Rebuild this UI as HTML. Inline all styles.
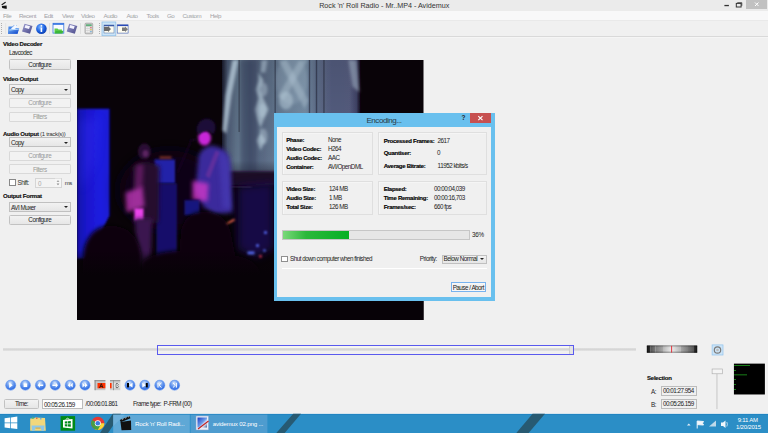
<!DOCTYPE html>
<html><head><meta charset="utf-8">
<style>
*{box-sizing:border-box;margin:0;padding:0}
html,body{width:768px;height:433px;overflow:hidden;background:#f0f0f0;font-family:"Liberation Sans",sans-serif;position:relative}
.a{position:absolute}
.t{position:absolute;white-space:nowrap;line-height:1;margin-top:.8px}
#title{margin-top:0}
.b{margin-top:0!important;font-weight:bold;letter-spacing:-.22px!important;-webkit-text-stroke:.15px #000}
.btn{position:absolute;border:1px solid #c2c2c2;background:linear-gradient(#f2f2f2,#e6e6e6);border-radius:1.5px}
.btnd{position:absolute;border:1px solid #d9d9d9;background:#f2f2f2;border-radius:1px}
.combo{position:absolute;border:1px solid #c0c0c0;background:linear-gradient(#f2f2f2,#e6e6e6)}
.arr{position:absolute;width:0;height:0;border-left:2.2px solid transparent;border-right:2.2px solid transparent;border-top:2.6px solid #222}
.lb{position:absolute;white-space:nowrap;line-height:1;font-size:6px;font-weight:bold;letter-spacing:-.27px;color:#000;-webkit-text-stroke:.15px #000}
.vl{position:absolute;white-space:nowrap;line-height:1;font-size:6.3px;letter-spacing:-.5px;color:#222}
.gb{position:absolute;border:1px solid #dfdfdf;box-shadow:inset .6px .6px 0 #fafafa}
</style></head><body>

<!-- title bar -->
<div class="a" style="left:0;top:0;width:768px;height:10.7px;background:#ebebeb"></div>
<div class="t" id="title" style="left:319.2px;top:1.9px;font-size:7.2px;letter-spacing:-.02px;color:#333">Rock 'n' Roll Radio - Mr..MP4 - Avidemux</div>
<div class="a" style="left:746px;top:0;width:21px;height:9px;background:#c1c1c1"></div>
<svg class="a" style="left:0;top:0" width="768" height="12" viewBox="0 0 768 12">
 <path d="M1.5 4.2 L5.2 1.8 Q6 1.8 5.8 2.8 L2.2 5.2 Q1.2 5.2 1.5 4.2 Z" fill="#1a1a1a"/>
 <path d="M1.8 6 L6.6 5.4 L6.8 8.8 L5.5 8.8 L2.2 8 Z" fill="#111"/>
 <rect x="724.4" y="4.9" width="4.5" height="1.3" fill="#333"/>
 <rect x="736.3" y="3.4" width="4.8" height="3.6" fill="none" stroke="#333" stroke-width="1"/>
 <path d="M737.3 2.7 L741.8 2.7 L741.8 5.8" fill="none" stroke="#333" stroke-width=".8"/>
 <path d="M755 2.5 L758.5 6 M758.5 2.5 L755 6" stroke="#fff" stroke-width="1"/>
</svg>
<svg class="a" style="left:278px;top:115px" width="8" height="10" viewBox="278 115 8 10">
 <path d="M279.6 118.6 L283.4 116.2 Q284.4 116.2 284.2 117.2 L280.4 119.6 Q279.4 119.6 279.6 118.6 Z" fill="#222"/>
 <path d="M279.8 120.2 L285 119.6 L285.2 123.6 L284 123.8 L280.2 123 Z" fill="#1a1a1a"/>
 <path d="M281 120.8 L283.5 120.6" stroke="#ccc" stroke-width=".6"/>
</svg>

<!-- menu bar -->
<div class="a" style="left:0;top:10.7px;width:768px;height:9.6px;background:#f8f8f9"></div>
<div class="a" style="left:0;top:36px;width:768px;height:1px;background:#d9d9d9"></div>
<div class="a" style="left:0;top:20.3px;width:768px;height:0.8px;background:#e9e9e9"></div>


<!-- toolbar -->
<svg class="a" style="left:0;top:20px" width="140" height="17" viewBox="0 20 140 17">
 <defs>
  <linearGradient id="gblue" x1="0" y1="0" x2="1" y2="1"><stop offset="0" stop-color="#7ab8f5"/><stop offset="1" stop-color="#0a3ec8"/></linearGradient>
  <radialGradient id="ginfo" cx=".4" cy=".35" r=".7"><stop offset="0" stop-color="#7fb8ff"/><stop offset=".6" stop-color="#1a5fe0"/><stop offset="1" stop-color="#0c3aa8"/></radialGradient>
  <linearGradient id="gdisk" x1="0" y1="0" x2="1" y2="1"><stop offset="0" stop-color="#9a9ad0"/><stop offset="1" stop-color="#4a4a88"/></linearGradient>
 </defs>
 <g fill="#b0b0b0"><rect x="1" y="23" width="1" height="1"/><rect x="1" y="25" width="1" height="1"/><rect x="1" y="27" width="1" height="1"/><rect x="1" y="29" width="1" height="1"/><rect x="1" y="31" width="1" height="1"/><rect x="1" y="33" width="1" height="1"/>
 <rect x="99" y="23" width="1" height="1"/><rect x="99" y="25" width="1" height="1"/><rect x="99" y="27" width="1" height="1"/><rect x="99" y="29" width="1" height="1"/><rect x="99" y="31" width="1" height="1"/><rect x="99" y="33" width="1" height="1"/></g>
 <rect x="5.5" y="23" width="0.6" height="11" fill="#dcdcdc"/>
 <rect x="49" y="23" width="0.7" height="11" fill="#d8d8d8"/>
 <rect x="80.3" y="23" width="0.7" height="11" fill="#d8d8d8"/>
 <!-- open -->
 <path d="M8.5 26.5 L12.5 26.5 L13.5 25.5 L17 25.5 L17 28 L19 28 L17.5 33.7 L8 33.7 Z" fill="#4a8ae8"/>
 <path d="M11 28.5 L15.5 24.5 L17.8 27.2 L13 30 Z" fill="#f4f8ff"/>
 <path d="M9.5 29.5 L19.2 28.5 L17.5 33.7 L8 33.7 Z" fill="url(#gblue)"/>
 <path d="M9.5 29.5 L19.2 28.5 L18.9 29.5 L9.3 30.4 Z" fill="#bfe0ff"/>
 <!-- save -->
 <path d="M24.5 23.7 L32.5 26 L30 33.8 L22 31.5 Z" fill="url(#gdisk)"/>
 <path d="M25.5 25 L30 26.3 L29 29 L24.6 27.8 Z" fill="#f4f4ff"/>
 <!-- info -->
 <circle cx="41.4" cy="28.7" r="5.3" fill="url(#ginfo)"/>
 <rect x="40.6" y="27.5" width="1.6" height="4.5" fill="#fff"/><circle cx="41.4" cy="25.8" r=".9" fill="#fff"/>
 <!-- folder window -->
 <rect x="53" y="23.3" width="10.8" height="9.8" fill="#f8fbff" stroke="#3a78e0" stroke-width=".8"/>
 <rect x="53" y="23.3" width="10.8" height="1.5" fill="#2f6fe0"/>
 <path d="M54.5 28.5 L57.5 28.5 L58.5 29.5 L62 29.5 L61.5 33.2 L54.5 33.2 Z" fill="#5ccc4a"/><path d="M55.5 31 L63.5 30.8 L62.5 33.4 L54.8 33.4 Z" fill="#3cb83a"/>
 <!-- save2 -->
 <path d="M69.2 23.7 L77.3 26 L74.8 33.8 L66.7 31.5 Z" fill="url(#gdisk)"/>
 <path d="M70.2 25 L74.7 26.3 L73.7 29 L69.3 27.8 Z" fill="#f4f4ff"/>
 <!-- calc -->
 <rect x="85" y="23.2" width="7.7" height="10.6" rx="1" fill="#d4d4d4" stroke="#8a8a8a" stroke-width=".6"/>
 <rect x="86" y="24.3" width="5.7" height="1.8" fill="#5fae7a"/>
 <g fill="#f4f4f4"><rect x="86.2" y="27" width="1.4" height="1.2"/><rect x="88.2" y="27" width="1.4" height="1.2"/><rect x="86.2" y="29" width="1.4" height="1.2"/><rect x="88.2" y="29" width="1.4" height="1.2"/><rect x="86.2" y="31" width="1.4" height="1.2"/><rect x="88.2" y="31" width="1.4" height="1.2"/></g><rect x="90.2" y="27" width="1.4" height="1.2" fill="#e07070"/><rect x="90.2" y="29" width="1.4" height="1.2" fill="#e0c050"/><rect x="90.2" y="31" width="1.4" height="1.2" fill="#70b0e0"/>
 <!-- pressed -->
 <rect x="102" y="22" width="13.8" height="13.7" fill="#cce4f7" stroke="#92c0e8" stroke-width=".8"/>
 <rect x="104" y="25" width="10" height="8" fill="#fffdf0" stroke="#4a6aa0" stroke-width=".5"/>
 <rect x="104" y="25" width="10" height="1.3" fill="#3a5aa8"/>
 <path d="M104 27 L108 27 L108 26 L111 29 L108 32 L108 31 L104 31 Z" fill="#6a6a6a"/>
 <!-- next -->
 <rect x="117.2" y="24.8" width="10.9" height="8.3" fill="#fffdf0" stroke="#3a5ab0" stroke-width=".6"/>
 <rect x="117.2" y="24.8" width="10.9" height="1.3" fill="#2a4ab8"/>
 <path d="M122 27.5 L125 27.5 L125 26.5 L128 29.2 L125 32 L125 31 L122 31 Z" fill="#7a7a7a"/>
</svg>
<div class="a" style="left:0;top:37px;width:768px;height:1px;background:#f5f5f5"></div>

<!-- menu text -->
<div class="t" style="left:3px;top:11.9px;font-size:6.2px;letter-spacing:-.45px;color:#a2a2a6">File</div>
<div class="t" style="left:19px;top:11.9px;font-size:6.2px;letter-spacing:-.45px;color:#a2a2a6">Recent</div>
<div class="t" style="left:44px;top:11.9px;font-size:6.2px;letter-spacing:-.45px;color:#a2a2a6">Edit</div>
<div class="t" style="left:62px;top:11.9px;font-size:6.2px;letter-spacing:-.45px;color:#a2a2a6">View</div>
<div class="t" style="left:81px;top:11.9px;font-size:6.2px;letter-spacing:-.45px;color:#a2a2a6">Video</div>
<div class="t" style="left:103.5px;top:11.9px;font-size:6.2px;letter-spacing:-.45px;color:#a2a2a6">Audio</div>
<div class="t" style="left:126.5px;top:11.9px;font-size:6.2px;letter-spacing:-.45px;color:#a2a2a6">Auto</div>
<div class="t" style="left:146.5px;top:11.9px;font-size:6.2px;letter-spacing:-.45px;color:#a2a2a6">Tools</div>
<div class="t" style="left:167px;top:11.9px;font-size:6.2px;letter-spacing:-.45px;color:#a2a2a6">Go</div>
<div class="t" style="left:182.5px;top:11.9px;font-size:6.2px;letter-spacing:-.45px;color:#a2a2a6">Custom</div>
<div class="t" style="left:210px;top:11.9px;font-size:6.2px;letter-spacing:-.45px;color:#a2a2a6">Help</div>

<!-- left panel -->
<div class="t b" style="left:3px;top:41px;font-size:6px;letter-spacing:-.4px;color:#111">Video Decoder</div>
<div class="t" style="left:9px;top:49.6px;font-size:6.3px;letter-spacing:-.5px;color:#222">Lavcodec</div>
<div class="btn" style="left:9px;top:59px;width:61.5px;height:10.5px"></div>
<div class="t" style="left:9px;top:60.8px;width:61.5px;text-align:center;font-size:6.3px;letter-spacing:-.5px;color:#222">Configure</div>

<div class="t b" style="left:3px;top:76px;font-size:6px;letter-spacing:-.4px;color:#111">Video Output</div>
<div class="combo" style="left:9px;top:84px;width:61.5px;height:10.5px"></div>
<div class="t" style="left:11px;top:86.4px;font-size:6.3px;letter-spacing:-.5px;color:#222">Copy</div>
<div class="arr" style="left:64px;top:88.5px"></div>
<div class="btnd" style="left:9px;top:97.5px;width:61.5px;height:10.5px"></div>
<div class="t" style="left:9px;top:99.3px;width:61.5px;text-align:center;font-size:6.3px;letter-spacing:-.5px;color:#9a9a9a">Configure</div>
<div class="btnd" style="left:9px;top:111.5px;width:61.5px;height:10.5px"></div>
<div class="t" style="left:9px;top:113.3px;width:61.5px;text-align:center;font-size:6.3px;letter-spacing:-.5px;color:#9a9a9a">Filters</div>

<div class="t" style="left:3px;top:130.6px;margin-top:0;font-size:6px;color:#111"><b style="letter-spacing:-.22px;-webkit-text-stroke:.15px #000">Audio Output</b><span style="letter-spacing:-.3px;color:#333"> (1 track(s))</span></div>
<div class="combo" style="left:9px;top:137px;width:61.5px;height:10px"></div>
<div class="t" style="left:11px;top:139.4px;font-size:6.3px;letter-spacing:-.5px;color:#222">Copy</div>
<div class="arr" style="left:64px;top:141.5px"></div>
<div class="btnd" style="left:9px;top:150.5px;width:61.5px;height:10px"></div>
<div class="t" style="left:9px;top:152.4px;width:61.5px;text-align:center;font-size:6.3px;letter-spacing:-.5px;color:#9a9a9a">Configure</div>
<div class="btnd" style="left:9px;top:164px;width:61.5px;height:10px"></div>
<div class="t" style="left:9px;top:165.9px;width:61.5px;text-align:center;font-size:6.3px;letter-spacing:-.5px;color:#9a9a9a">Filters</div>
<div class="a" style="left:9px;top:179px;width:6.5px;height:6.5px;border:1px solid #888;background:#fff"></div>
<div class="t" style="left:17.5px;top:179.5px;font-size:6.3px;letter-spacing:-.5px;color:#333">Shift:</div>
<div class="a" style="left:35px;top:178px;width:27px;height:9.5px;border:1px solid #d5d5d5;background:#f3f3f3"></div>
<div class="t" style="left:38px;top:180.5px;font-size:6.3px;letter-spacing:-.5px;color:#aaa">0</div>
<div class="t" style="left:64.7px;top:178.8px;font-size:6px;letter-spacing:-.5px;color:#333">ms</div>
<svg class="a" style="left:54px;top:178px" width="8" height="10" viewBox="54 178 8 10"><rect x="55" y="178.6" width="6" height="8.2" fill="#f6f6f6"/><path d="M56.6 181.8 L58 180.2 L59.4 181.8 Z M56.6 183.6 L58 185.2 L59.4 183.6 Z" fill="#8a8a8a"/></svg>

<div class="t b" style="left:3px;top:193px;font-size:6px;letter-spacing:-.4px;color:#111">Output Format</div>
<div class="combo" style="left:9px;top:202px;width:61.5px;height:9.5px"></div>
<div class="t" style="left:11px;top:204px;font-size:6.3px;letter-spacing:-.5px;color:#222">AVI Muxer</div>
<div class="arr" style="left:64px;top:206px"></div>
<div class="btn" style="left:9px;top:215px;width:61.5px;height:10px"></div>
<div class="t" style="left:9px;top:216.6px;width:61.5px;text-align:center;font-size:6.3px;letter-spacing:-.5px;color:#222">Configure</div>

<!-- video -->
<svg class="a" id="video" style="left:77.4px;top:59.5px" width="346.5" height="260" viewBox="77.5 59.5 346.5 260">
 <defs>
  <filter id="b05" x="-50%" y="-50%" width="200%" height="200%"><feGaussianBlur stdDeviation=".6"/></filter>
  <filter id="b15" x="-50%" y="-50%" width="200%" height="200%"><feGaussianBlur stdDeviation="1.5"/></filter>
  <filter id="b1" x="-50%" y="-50%" width="200%" height="200%"><feGaussianBlur stdDeviation="1"/></filter>
  <filter id="b2" x="-50%" y="-50%" width="200%" height="200%"><feGaussianBlur stdDeviation="2"/></filter>
  <filter id="b4" x="-50%" y="-50%" width="200%" height="200%"><feGaussianBlur stdDeviation="4"/></filter>
  <filter id="b8" x="-50%" y="-50%" width="200%" height="200%"><feGaussianBlur stdDeviation="8"/></filter>
  <linearGradient id="curt" x1="222.5" x2="361" y1="0" y2="0" gradientUnits="userSpaceOnUse">
   <stop offset="0" stop-color="#181a2a"/><stop offset=".04" stop-color="#4a5872"/><stop offset=".12" stop-color="#64788e"/><stop offset=".2" stop-color="#52607a"/>
   <stop offset=".3" stop-color="#5a6a84"/><stop offset=".45" stop-color="#6c829a"/><stop offset=".6" stop-color="#7890a8"/><stop offset=".68" stop-color="#62728e"/>
   <stop offset=".8" stop-color="#565e82"/><stop offset=".92" stop-color="#585e82"/><stop offset=".97" stop-color="#42466a"/><stop offset="1" stop-color="#140c1c"/>
  </linearGradient>
  <linearGradient id="curtv" x1="0" x2="0" y1="59.5" y2="178" gradientUnits="userSpaceOnUse">
   <stop offset="0" stop-color="#000" stop-opacity=".12"/><stop offset=".85" stop-color="#000" stop-opacity="0"/><stop offset="1" stop-color="#100420" stop-opacity=".5"/>
  </linearGradient>
  <linearGradient id="bluep" x1="77.5" x2="110" y1="0" y2="0" gradientUnits="userSpaceOnUse">
   <stop offset="0" stop-color="#1410a8"/><stop offset=".3" stop-color="#1a16cc"/><stop offset=".7" stop-color="#1e1ce0"/><stop offset="1" stop-color="#1c1ad4"/>
  </linearGradient>
 </defs>
 <rect x="77.5" y="59.5" width="346.5" height="260" fill="#090308"/>
 <!-- curtain -->
 <rect x="222.5" y="59.5" width="138.5" height="116" fill="url(#curt)" filter="url(#b05)"/>
 <rect x="222.5" y="59.5" width="138.5" height="116" fill="url(#curtv)"/>
 <g filter="url(#b15)" fill="#b4c8d6">
  <path d="M233 59.5 L239 59.5 L232 95 L227 133 L223 130 L226 95 Z" opacity="0.81"/>
  <path d="M259 72 L264 80 L260 89 L264 98 L269 109 L264 120 L260 130 L266 140 L261 150 L257 140 L262 130 L258 120 L255 109 L259 98 L256 89 L259 80 Z" opacity="0.68"/>
  <path d="M262 59.5 L268 59.5 L266 72 L261 72 Z" opacity="0.54"/>
  <ellipse cx="264" cy="89" rx="4" ry="7" opacity="0.47"/>
  <ellipse cx="263" cy="110" rx="4" ry="7" opacity="0.47"/>
  <ellipse cx="264" cy="136" rx="4" ry="8" opacity="0.47"/>
  <ellipse cx="286.5" cy="100" rx="7" ry="9" opacity="0.54"/>
  <path d="M279 59.5 L287 59.5 L309 100 L305 108 Z" opacity="0.41"/>
  <path d="M300 59.5 L308 59.5 L284 100 L278 96 Z" opacity="0.38"/>
  <ellipse cx="292" cy="80" rx="16" ry="24" opacity="0.20"/>
  <path d="M349 59.5 L357 59.5 L360 92 L353 86 Z" opacity="0.47"/>
 </g>
 <rect x="241" y="59.5" width="16" height="114" fill="#283250" opacity=".35" filter="url(#b2)"/>
 <g fill="#10101e" opacity=".45" filter="url(#b05)"><rect x="239" y="59.5" width="1.2" height="72"/><rect x="275" y="59.5" width="1.3" height="54"/><rect x="309.3" y="59.5" width="1.4" height="54"/><rect x="316.3" y="59.5" width="1.4" height="54"/><rect x="323.8" y="59.5" width="1.3" height="54"/></g>
 <rect x="220" y="171" width="58" height="14" fill="#1e0828" filter="url(#b1)"/>
 <!-- blue panel -->
 <path d="M77.5 108.3 L110 108.3 L110 215 L95 245 L85 258 L77.5 258 Z" fill="url(#bluep)" filter="url(#b1)"/>
 <path d="M80 120 L100 118 L96 160 L82 190 Z" fill="#3a3aff" opacity=".25" filter="url(#b4)"/>
 <!-- background glows -->
 <ellipse cx="170" cy="190" rx="50" ry="40" fill="#0e0416" filter="url(#b8)"/>
 <path d="M238 186 L274 182 L274 248 L256 258 L238 248 Z" fill="#1c0c5e" opacity=".7" filter="url(#b4)"/>
 <!-- amp -->
 <rect x="155" y="159" width="20.5" height="24" fill="#2420a8" filter="url(#b1)"/>
 <rect x="157" y="183" width="20.4" height="75" fill="#14106a" filter="url(#b1)"/>
 <rect x="160" y="155.5" width="12" height="3" fill="#c05030" opacity=".5" filter="url(#b1)"/>
 <!-- guitarist 1 -->
 <ellipse cx="145" cy="151" rx="6.5" ry="8" fill="#2a1034" filter="url(#b1)"/>
 <path d="M133 166 Q146 157 160 166 L159 222 L134 222 Z" fill="#26102e" filter="url(#b2)"/>
 <path d="M137 164 L144 164 L143 188 L135 188 Z" fill="#a02a98" opacity=".45" filter="url(#b2)"/><ellipse cx="146" cy="153" rx="3" ry="3.5" fill="#8a3a8a" opacity=".5" filter="url(#b1)"/>
 <path d="M126 192 L143 186 L145 206 L127 212 Z" fill="#c83ac0" opacity=".75" filter="url(#b2)"/>
 <path d="M135 208 L144 208 L144 220 L135 220 Z" fill="#ff48ff" opacity=".9" filter="url(#b1)"/>
 <path d="M135 218 L153 218 L151 266 L139 266 Z" fill="#3a1650" filter="url(#b2)"/>
 <!-- guitarist 2 -->
 <path d="M199 156 Q201 147 212 145 Q227 147 230 158 L233 212 L214 214 L204 206 L196 190 Z" fill="#3a2c9c" filter="url(#b2)"/>
 <path d="M219 150 Q229 153 231 168 L232 208 L223 208 Z" fill="#4a3cb8" opacity=".6" filter="url(#b2)"/>
 <ellipse cx="205" cy="137.5" rx="6.5" ry="7.5" fill="#c828d8" filter="url(#b15)"/>
 <path d="M197 130 Q198 119 207 118 Q216 119 216 128 L214 134 Q208 127 199 134 Z" fill="#1e0a38" filter="url(#b1)"/>
 <path d="M193 180 L209 183 L208 201 L193 199 Z" fill="#d038c8" opacity=".8" filter="url(#b2)"/>
 <path d="M216 150 L220 152 L210 178 L206 175 Z" fill="#b03aa0" opacity=".3" filter="url(#b1)"/>
 <rect x="185" y="199.6" width="15" height="15" fill="#18127e" filter="url(#b1)"/>
 <path d="M190 140 L197 139 M191 142 L178 172" stroke="#1a0a28" stroke-width="1.3" filter="url(#b1)"/>
 <!-- drums -->
 <path d="M226 224 L235 219" stroke="#ff6a50" stroke-width="1.6" filter="url(#b1)"/>
 <path d="M232 186 L252 187" stroke="#5a4a80" stroke-width="1" opacity=".7" filter="url(#b1)"/>
 <g fill="#5a70ff" filter="url(#b1)"><circle cx="266" cy="232" r="1.5"/><circle cx="258" cy="245" r="1.5"/><circle cx="265" cy="250" r="1.2"/><rect x="248" y="251" width="7" height="3"/></g>
 <circle cx="261" cy="256" r="1.4" fill="#ff4060" filter="url(#b1)"/>
 <!-- audience silhouettes -->
 <path d="M80 320 L84 250 Q90 224 114 225 Q138 227 142 255 L142 320 Z" fill="#080208" filter="url(#b2)"/>
 <path d="M140 320 L142 262 Q150 252 180 250 L181 232 Q184 211 207 211 Q230 212 233 240 L236 255 Q258 258 262 275 L262 320 Z" fill="#080208" filter="url(#b2)"/>
 <defs><linearGradient id="gbot" x1="0" x2="0" y1="0" y2="1"><stop offset="0" stop-color="#070207" stop-opacity="0"/><stop offset=".35" stop-color="#070207" stop-opacity="1"/></linearGradient></defs><rect x="77.5" y="250" width="346.5" height="70" fill="url(#gbot)"/>
</svg>

<!-- dialog -->
<div class="a" style="left:273.7px;top:112.9px;width:221.3px;height:187.8px;background:#69c0ee"></div>
<div class="a" style="left:277.1px;top:127.2px;width:214.1px;height:169.8px;background:#f0f0f0"></div>
<div class="t" style="left:334px;top:116px;width:100px;text-align:center;font-size:8px;letter-spacing:-.45px;color:#2a3a48">Encoding...</div>
<div class="a" style="left:470px;top:113.2px;width:21.3px;height:9.6px;background:#c75050"></div>
<svg class="a" style="left:470px;top:113px" width="22" height="10" viewBox="470 113 22 10"><path d="M478.3 116.1 L482.5 120.1 M482.5 116.1 L478.3 120.1" stroke="#fff" stroke-width="1.1"/></svg>
<div class="t" style="left:461.5px;top:114.5px;font-size:6.5px;color:#222;font-weight:bold">?</div>
<div class="gb" style="left:281.5px;top:132px;width:91.2px;height:43px"></div>
<div class="gb" style="left:378px;top:132px;width:109px;height:43px"></div>
<div class="gb" style="left:281.5px;top:181px;width:91.2px;height:34px"></div>
<div class="gb" style="left:378px;top:181px;width:109px;height:34px"></div>
<div class="lb" style="left:286.2px;top:136.6px">Phase:</div><div class="vl" style="left:328px;top:136.6px">None</div>
<div class="lb" style="left:286.2px;top:145.6px">Video Codec:</div><div class="vl" style="left:328px;top:145.6px">H264</div>
<div class="lb" style="left:286.2px;top:154.6px">Audio Codec:</div><div class="vl" style="left:328px;top:154.6px">AAC</div>
<div class="lb" style="left:286.2px;top:163.6px">Container:</div><div class="vl" style="left:328px;top:163.6px">AVI/OpenDML</div>
<div class="lb" style="left:383.7px;top:138.4px">Processed Frames:</div><div class="vl" style="left:437.6px;top:138.4px">2617</div>
<div class="lb" style="left:383.7px;top:150.4px">Quantiser:</div><div class="vl" style="left:437px;top:150.4px">0</div>
<div class="lb" style="left:383.7px;top:163px">Average Bitrate:</div><div class="vl" style="left:437.6px;top:163px">11952 kbits/s</div>
<div class="lb" style="left:286.2px;top:186.2px">Video Size:</div><div class="vl" style="left:328.9px;top:186.2px">124 MB</div>
<div class="lb" style="left:286.2px;top:194.7px">Audio Size:</div><div class="vl" style="left:328.9px;top:194.7px">1 MB</div>
<div class="lb" style="left:286.2px;top:204.1px">Total Size:</div><div class="vl" style="left:328.9px;top:204.1px">126 MB</div>
<div class="lb" style="left:383.7px;top:186.2px">Elapsed:</div><div class="vl" style="left:434px;top:186.2px">00:00:04,039</div>
<div class="lb" style="left:383.7px;top:194.7px">Time Remaining:</div><div class="vl" style="left:434px;top:194.7px">00:00:16,703</div>
<div class="lb" style="left:383.7px;top:204.1px">Frames/sec:</div><div class="vl" style="left:434px;top:204.1px">660 fps</div>
<div class="a" style="left:282px;top:230px;width:188px;height:9.5px;border:1px solid #c6c6c6;background:#e6e6e6"></div>
<div class="a" style="left:283px;top:231px;width:65.6px;height:7.5px;background:linear-gradient(90deg,#7ad87a,#2bb83b 35%,#06b025)"></div>
<div class="vl" style="left:472px;top:231.7px;letter-spacing:-.3px">36%</div>
<div class="a" style="left:281.2px;top:256.4px;width:6.5px;height:6px;border:1px solid #8f8f8f;background:#fff"></div>
<div class="vl" style="left:290px;top:256.2px">Shut down computer when finished</div>
<div class="vl" style="left:419.8px;top:256.2px">Priority:</div>
<div class="combo" style="left:441.6px;top:254.6px;width:45px;height:9.2px"></div>
<div class="vl" style="left:443.5px;top:256.4px;letter-spacing:-.45px">Below Normal</div>
<div class="arr" style="left:480px;top:258px"></div>
<div class="a" style="left:281.5px;top:268px;width:205px;height:1px;background:#d5d5d5;border-bottom:1px solid #fff"></div>
<div class="a" style="left:451px;top:282.3px;width:34.6px;height:10.2px;border:1px solid #78b2ee;background:#f2f2f2;box-shadow:inset 0 0 0 .6px #fbfbfb"></div>
<div class="vl" style="left:451px;top:285px;width:34.6px;text-align:center">Pause / Abort</div>

<!-- slider -->
<div class="a" style="left:3px;top:348px;width:633px;height:3px;background:linear-gradient(#e0e0e0,#d6d6d6,#e4e4e4)"></div>
<div class="a" style="left:158px;top:346px;width:415px;height:1.5px;background:rgba(250,250,240,.6)"></div>
<div class="a" style="left:569px;top:346px;width:4.5px;height:8.5px;background:#e4e4e4;border-left:1px solid #cfcfcf"></div>
<div class="a" style="left:157.2px;top:345.3px;width:416.8px;height:9.5px;border:1px solid #5a5aee"></div>

<!-- nav -->
<svg class="a" style="left:0;top:375px" width="190" height="21" viewBox="0 375 190 21"><defs><radialGradient id="gnav" cx=".45" cy=".3" r=".7"><stop offset="0" stop-color="#e0ecfc"/><stop offset=".4" stop-color="#76a4f0"/><stop offset=".85" stop-color="#3470e4"/><stop offset="1" stop-color="#5a8ae8"/></radialGradient></defs><circle cx="10.7" cy="385.2" r="5.1" fill="url(#gnav)"/><circle cx="10.7" cy="385.2" r="5.1" fill="none" stroke="#6a9af0" stroke-width=".5"/><path d="M9.2 382.5 L12.7 385.2 L9.2 388 Z" fill="#fff"/><circle cx="25.4" cy="385.2" r="5.1" fill="url(#gnav)"/><circle cx="25.4" cy="385.2" r="5.1" fill="none" stroke="#6a9af0" stroke-width=".5"/><rect x="23.599999999999998" y="383.4" width="3.6" height="3.6" fill="#fff"/><circle cx="40.4" cy="385.2" r="5.1" fill="url(#gnav)"/><circle cx="40.4" cy="385.2" r="5.1" fill="none" stroke="#6a9af0" stroke-width=".5"/><path d="M37.6 385.2 L39.9 382.6 L39.9 384.4 L43.199999999999996 384.4 L43.199999999999996 386 L39.9 386 L39.9 387.8 Z" fill="#fff"/><circle cx="55.2" cy="385.2" r="5.1" fill="url(#gnav)"/><circle cx="55.2" cy="385.2" r="5.1" fill="none" stroke="#6a9af0" stroke-width=".5"/><path d="M58.0 385.2 L55.7 382.6 L55.7 384.4 L52.400000000000006 384.4 L52.400000000000006 386 L55.7 386 L55.7 387.8 Z" fill="#fff"/><circle cx="70.2" cy="385.2" r="5.1" fill="url(#gnav)"/><circle cx="70.2" cy="385.2" r="5.1" fill="none" stroke="#6a9af0" stroke-width=".5"/><path d="M67.7 385.2 L70.2 382.8 L70.2 387.6 Z M70.2 385.2 L72.7 382.8 L72.7 387.6 Z" fill="#fff"/><circle cx="85" cy="385.2" r="5.1" fill="url(#gnav)"/><circle cx="85" cy="385.2" r="5.1" fill="none" stroke="#6a9af0" stroke-width=".5"/><path d="M87.5 385.2 L85 382.8 L85 387.6 Z M85 385.2 L82.5 382.8 L82.5 387.6 Z" fill="#fff"/><rect x="94.6" y="380.2" width="10.8" height="10" fill="#c8c8c8"/><rect x="94.6" y="380.2" width="10.8" height="1" fill="#8a8a8a"/><rect x="94.6" y="380.2" width="1" height="10" fill="#8a8a8a"/><rect x="97.5" y="383" width="7.9" height="5.3" fill="#ff3200"/><path d="M99.6 388 L101.3 383.6 L103 388 M100.3 386.5 L102.3 386.5" stroke="#111" stroke-width=".8" fill="none"/><rect x="110" y="380.2" width="10.3" height="10" fill="#cfcfcf"/><rect x="110" y="380.2" width="10.3" height="1" fill="#8a8a8a"/><rect x="113" y="380.2" width=".8" height="10" fill="#8a8a8a"/><rect x="110" y="383" width="1.6" height="5.3" fill="#ff3200"/><rect x="114.5" y="383" width="5" height="5" fill="#f4f4f4"/><path d="M116 383.6 L116 387.6 L118 387.6 L118.5 386.8 L117.8 385.6 L118.3 384.4 L117.8 383.6 Z" stroke="#222" stroke-width=".6" fill="none"/><circle cx="130" cy="385.2" r="5.1" fill="url(#gnav)"/><circle cx="130" cy="385.2" r="5.1" fill="none" stroke="#6a9af0" stroke-width=".5"/><rect x="127" y="383" width="2" height="4.4" fill="#000"/><path d="M132.5 382.8 L129 385.2 L132.5 387.6Z" fill="#fff"/><circle cx="144.8" cy="385.2" r="5.1" fill="url(#gnav)"/><circle cx="144.8" cy="385.2" r="5.1" fill="none" stroke="#6a9af0" stroke-width=".5"/><rect x="145.8" y="383" width="2" height="4.4" fill="#000"/><path d="M142.3 382.8 L145.8 385.2 L142.3 387.6Z" fill="#fff"/><circle cx="159.8" cy="385.2" r="5.1" fill="url(#gnav)"/><circle cx="159.8" cy="385.2" r="5.1" fill="none" stroke="#6a9af0" stroke-width=".5"/><path d="M158 382.8 L158 387.6 M161.5 382.8 L159 385.2 L161.5 387.6" stroke="#fff" stroke-width="1" fill="none"/><circle cx="174.6" cy="385.2" r="5.1" fill="url(#gnav)"/><circle cx="174.6" cy="385.2" r="5.1" fill="none" stroke="#6a9af0" stroke-width=".5"/><path d="M176.4 382.8 L176.4 387.6 M172.9 382.8 L175.4 385.2 L172.9 387.6" stroke="#fff" stroke-width="1" fill="none"/></svg>
<!-- time row -->
<div class="btn" style="left:4px;top:398.5px;width:35px;height:10px"></div>
<div class="t" style="left:4px;top:400.6px;width:35px;text-align:center;font-size:6.3px;letter-spacing:-.5px;color:#222">Time:</div>
<div class="a" style="left:42px;top:398.5px;width:40.5px;height:10.5px;border:1px solid #bcbcbc;background:#fff"></div>
<div class="t" style="left:44px;top:400.8px;font-size:6.3px;letter-spacing:-.5px;color:#222">00:05:26.159</div>
<div class="t" style="left:85.5px;top:400.7px;font-size:6.3px;letter-spacing:-.5px;color:#222">/00:06:01.861</div>
<div class="t" style="left:133px;top:400.7px;font-size:6.3px;letter-spacing:-.5px;color:#222">Frame type:&nbsp; P-FRM (00)</div>

<!-- right widgets -->
<svg class="a" style="left:640px;top:340px" width="128" height="73" viewBox="640 340 128 73">
 <defs><linearGradient id="gjog" x1="0" x2="1" y1="0" y2="0"><stop offset="0" stop-color="#0a0a0a"/><stop offset=".05" stop-color="#2a2a2a"/><stop offset=".12" stop-color="#5a5a5a"/><stop offset=".3" stop-color="#9a9a9a"/><stop offset=".45" stop-color="#d4d4d4"/><stop offset=".5" stop-color="#e6e6e6"/><stop offset=".55" stop-color="#d4d4d4"/><stop offset=".7" stop-color="#9a9a9a"/><stop offset=".88" stop-color="#5a5a5a"/><stop offset=".95" stop-color="#2a2a2a"/><stop offset="1" stop-color="#0a0a0a"/></linearGradient>
 <linearGradient id="gjogv" x1="0" x2="0" y1="0" y2="1"><stop offset="0" stop-color="#000" stop-opacity=".35"/><stop offset=".3" stop-color="#000" stop-opacity="0"/><stop offset=".7" stop-color="#000" stop-opacity="0"/><stop offset="1" stop-color="#000" stop-opacity=".35"/></linearGradient></defs>
 <defs><linearGradient id="js0" x1="0" x2="1" y1="0" y2="0"><stop offset="0" stop-color="#111"/><stop offset="1" stop-color="#333"/></linearGradient><linearGradient id="js1" x1="0" x2="1" y1="0" y2="0"><stop offset="0" stop-color="#555"/><stop offset="1" stop-color="#7a7a7a"/></linearGradient><linearGradient id="js2" x1="0" x2="1" y1="0" y2="0"><stop offset="0" stop-color="#7e7e7e"/><stop offset="1" stop-color="#a8a8a8"/></linearGradient><linearGradient id="js3" x1="0" x2="1" y1="0" y2="0"><stop offset="0" stop-color="#b8b8b8"/><stop offset="1" stop-color="#ececec"/></linearGradient><linearGradient id="js4" x1="0" x2="1" y1="0" y2="0"><stop offset="0" stop-color="#ececec"/><stop offset="1" stop-color="#b8b8b8"/></linearGradient><linearGradient id="js5" x1="0" x2="1" y1="0" y2="0"><stop offset="0" stop-color="#a8a8a8"/><stop offset="1" stop-color="#7e7e7e"/></linearGradient><linearGradient id="js6" x1="0" x2="1" y1="0" y2="0"><stop offset="0" stop-color="#7a7a7a"/><stop offset="1" stop-color="#555"/></linearGradient><linearGradient id="js7" x1="0" x2="1" y1="0" y2="0"><stop offset="0" stop-color="#333"/><stop offset="1" stop-color="#111"/></linearGradient></defs><rect x="646.8" y="345.5" width="3.75" height="7.3" fill="url(#js0)"/><rect x="650.5" y="345.5" width="5.05" height="7.3" fill="url(#js1)"/><rect x="655.5" y="345.5" width="7.55" height="7.3" fill="url(#js2)"/><rect x="663" y="345.5" width="8.55" height="7.3" fill="url(#js3)"/><rect x="671.5" y="345.5" width="9.05" height="7.3" fill="url(#js4)"/><rect x="680.5" y="345.5" width="7.55" height="7.3" fill="url(#js5)"/><rect x="688" y="345.5" width="6.05" height="7.3" fill="url(#js6)"/><rect x="694" y="345.5" width="3.25" height="7.3" fill="url(#js7)"/><rect x="646.8" y="345.3" width="50.4" height="7.7" rx="1" fill="url(#gjogv)"/>
 <rect x="671.2" y="345.8" width=".9" height="6.8" fill="#e0202a"/>
 <rect x="712.1" y="344.9" width="10.9" height="10.1" fill="#cce4f7" stroke="#90c4ee" stroke-width=".7"/>
 <circle cx="717.5" cy="350" r="3.2" fill="none" stroke="#7a7a7a" stroke-width="1.2"/>
 <circle cx="717.5" cy="350" r="1.3" fill="#bbb"/>
 <rect x="716.2" y="373" width="1.5" height="36.1" fill="#d4d4d4"/>
 <rect x="712.1" y="369" width="10.4" height="4.8" fill="#f4f4f4" stroke="#a8a8a8" stroke-width=".6"/>
 <rect x="733.4" y="363.1" width="32" height="32" fill="#fafafa"/>
 <rect x="733.9" y="363.6" width="31" height="30.9" fill="#000"/>
 <g fill="#1a8a1a"><rect x="734" y="365.1" width="16" height=".9"/><rect x="734" y="370.1" width="2" height=".9"/><rect x="734" y="374.4" width="13" height=".9"/><rect x="734" y="379" width="2" height=".9"/><rect x="734" y="384" width="2" height=".9"/><rect x="734" y="389" width="2" height=".9"/></g>
</svg>

<!-- selection -->
<div class="t b" style="left:647px;top:374.6px;font-size:6px;letter-spacing:-.4px;color:#111">Selection</div>
<div class="t" style="left:651px;top:388px;font-size:6.3px;letter-spacing:-.5px;color:#222">A:</div>
<div class="a" style="left:661px;top:386px;width:36px;height:9.5px;border:1px solid #bcbcbc;background:#f0f0f0"></div>
<div class="t" style="left:663px;top:387.4px;font-size:6.3px;letter-spacing:-.5px;color:#222">00:01:27.954</div>
<div class="t" style="left:651px;top:401.1px;font-size:6.3px;letter-spacing:-.5px;color:#222">B:</div>
<div class="a" style="left:661px;top:399px;width:36px;height:9.5px;border:1px solid #bcbcbc;background:#f0f0f0"></div>
<div class="t" style="left:663px;top:400.5px;font-size:6.3px;letter-spacing:-.5px;color:#222">00:05:26.159</div>

<!-- taskbar -->
<svg class="a" style="left:0;top:413px" width="768" height="20" viewBox="0 413 768 20">
 <rect x="0" y="413.7" width="768" height="19.3" fill="#2b8ec6"/><rect x="0" y="413.7" width="768" height="1" fill="#1f82c0"/><rect x="0" y="412.5" width="768" height="1.2" fill="#f8f8f8"/>
 <path d="M100 433 L112.8 413.7 L121 413.7 L108 433 Z" fill="#275a72"/>
 <path d="M276.3 433 L293.2 413.7 L301 413.7 L284.7 433 Z" fill="#275a72"/>
 <path d="M516.3 433 L532.6 413.7 L545 413.7 L528.6 433 Z" fill="#275a72"/>
 <!-- win logo -->
 <path d="M4.6 418.3 L10.3 417.5 L10.3 422.5 L4.6 422.5 Z M11 417.4 L17.3 416.6 L17.3 422.5 L11 422.5 Z M4.6 423.2 L10.3 423.2 L10.3 428.2 L4.6 427.5 Z M11 423.2 L17.3 423.2 L17.3 429 L11 428.3 Z" fill="#fff"/>
 <!-- explorer -->
 <path d="M30.2 418.5 L34 418.5 L35 417.5 L45 418 L45.8 430.7 L30.2 430.7 Z" fill="#f2d77c"/>
 <rect x="32" y="417.2" width="1.5" height="1.5" fill="#5ac05a"/><rect x="36" y="417.5" width="1.5" height="1.5" fill="#e0704a"/><rect x="40" y="418" width="1.5" height="1.5" fill="#6ab0e0"/>
 <path d="M31.5 425.5 L44.5 425.5 L44 430.7 L41.5 430.7 L41 428.5 L35 428.5 L34.5 430.7 L32 430.7 Z" fill="#8ec8ea"/>
 <rect x="35.5" y="427.5" width="5" height="1.2" fill="#e0b040"/>
 <!-- store -->
 <rect x="60.6" y="416.1" width="14.5" height="14.6" fill="#008a17"/>
 <path d="M63 420 L72.5 419 L72.5 428.5 L63 427.5 Z" fill="#fff"/>
 <path d="M65.5 419.8 Q67 416.8 69.5 419.3" stroke="#fff" stroke-width=".8" fill="none"/>
 <path d="M64.8 421.5 L67.4 421.3 L67.4 423.6 L64.8 423.6 Z M68 421.2 L70.8 421 L70.8 423.6 L68 423.6 Z M64.8 424.2 L67.4 424.2 L67.4 426.4 L64.8 426.2 Z M68 424.2 L70.8 424.2 L70.8 426.7 L68 426.5 Z" fill="#008a17"/>
 <!-- chrome -->
 <circle cx="97.8" cy="423.3" r="6.6" fill="#e53935"/>
 <path d="M97.8 423.3 L92.1 426.6 A6.6 6.6 0 0 1 92.1 420 Z" fill="#43a047"/>
 <path d="M97.8 423.3 L104.4 423.3 A6.6 6.6 0 0 1 94.5 429 Z" fill="#fdd835"/>
 <path d="M97.8 423.3 L92.1 426.6 A6.6 6.6 0 0 0 97.8 429.9 L100.5 425 Z" fill="#43a047"/>
 <circle cx="97.8" cy="423.3" r="3" fill="#fff"/><circle cx="97.8" cy="423.3" r="2.3" fill="#3b7de0"/>
 <!-- active task -->
 <rect x="113.2" y="414.7" width="76.6" height="18.3" fill="#5fa8d6"/>
 <path d="M113.2 414.7 L125 414.7 L113.2 426 Z" fill="#7ab8de" opacity=".6"/>
 <rect x="190.6" y="414.7" width="76.8" height="18.3" fill="#4e9ccf"/>
 <!-- clapper -->
 <path d="M120.5 422 L131 420.5 L131.2 430 L121.5 430.3 Z" fill="#111"/>
 <path d="M119.8 420 L129.5 416 L130.5 418.2 L120.8 422.2 Z" fill="#111"/>
 <path d="M122 419.5 L123.5 418.8 M125 418.3 L126.5 417.6 M128 417 L129.3 416.5" stroke="#ddd" stroke-width=".7"/>
 <!-- png icon -->
 <rect x="196" y="416" width="12.5" height="14" fill="#e8eef8" stroke="#8aa0c8" stroke-width=".5"/>
 <defs><linearGradient id="gpic" x1="0" y1="0" x2="1" y2="1"><stop offset="0" stop-color="#1a3ac0"/><stop offset=".5" stop-color="#6a9ae8"/><stop offset=".7" stop-color="#f0f4ff"/><stop offset="1" stop-color="#3a5a90"/></linearGradient></defs><rect x="197.5" y="417.5" width="9.5" height="10" fill="url(#gpic)"/>
 <path d="M198 429 L208.5 421" stroke="#c02020" stroke-width="1.2"/>
 <!-- tray -->
 <path d="M687 425.5 L688.8 423.5 L690.6 425.5 Z" fill="#e8f0f8"/>
 <path d="M697.2 421 L697.2 428.5 M697.2 421 L703.5 421.5 L702.5 423.2 L703.5 425 L697.2 424.6" stroke="#f0f6fb" stroke-width="1" fill="#f0f6fb"/>
 <path d="M709 426.5 L716 420.5 L716 426.5 Z" fill="#d8e6f0" opacity=".85"/>
 <path d="M721 422.5 L723 422.5 L725.5 420.5 L725.5 428 L723 426 L721 426 Z" fill="#f0f6fb"/>
 <path d="M726.8 422 Q728 424.2 726.8 426.5" stroke="#f0f6fb" stroke-width=".7" fill="none"/>
</svg>
<div class="t" style="left:135px;top:420px;font-size:6.2px;letter-spacing:-.2px;color:#fff">Rock 'n' Roll Radi...</div>
<div class="t" style="left:212.8px;top:420px;font-size:6.2px;letter-spacing:-.2px;color:#fff">avidemux 02.png ...</div>
<div class="t" style="left:737.7px;top:416px;font-size:6px;letter-spacing:-.2px;color:#fff">9:11 AM</div>
<div class="t" style="left:736px;top:423.6px;font-size:6px;letter-spacing:-.2px;color:#fff">1/20/2015</div>


</body></html>
